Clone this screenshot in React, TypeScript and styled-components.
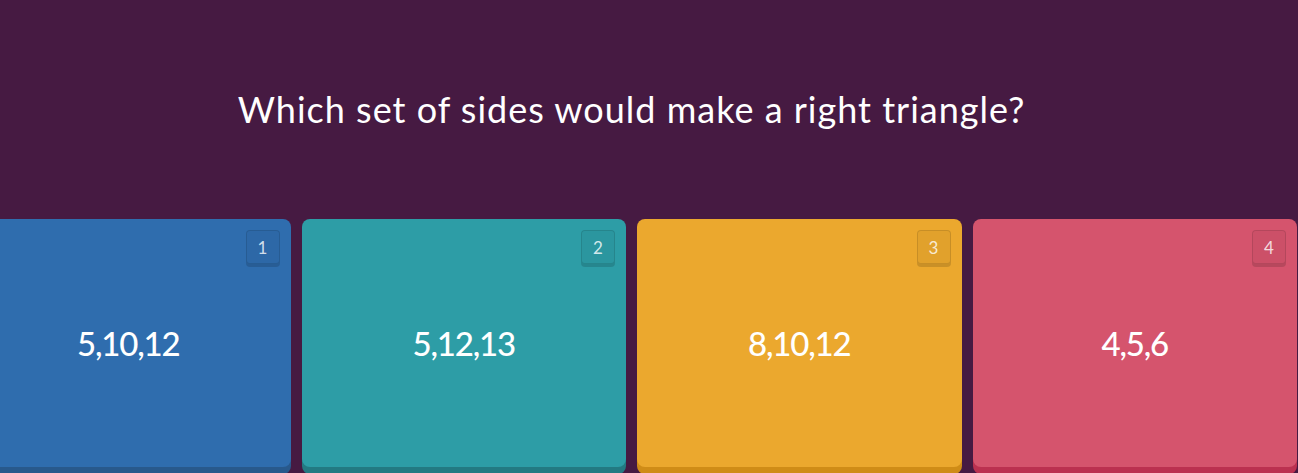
import React from 'react';
import styled, { createGlobalStyle } from 'styled-components';

const GlobalStyle = createGlobalStyle`
  html, body {
    margin: 0;
    padding: 0;
    background: #461a42;
    overflow: hidden;
  }
  body {
    font-family: Lato, 'Noto Sans', sans-serif;
  }
`;

const Page = styled.div`
  height: 473px;
  overflow: hidden;
  background: #461a42;
`;

const Stage = styled.div`
  width: 1331px;
  margin-left: -34px;
  display: flex;
  flex-direction: column;
`;

const QuestionArea = styled.div`
  height: 219px;
  display: flex;
  align-items: center;
  justify-content: center;
`;

const Question = styled.h1`
  margin: 0 0 2px;
  font-size: 36px;
  font-weight: 400;
  color: #ffffff;
  letter-spacing: 1px;
`;

const Options = styled.div`
  display: flex;
  gap: 11px;
`;

const Option = styled.div<{ $bg: string; $shade: string }>`
  position: relative;
  flex: 0 0 324.5px;
  height: 248px;
  border-radius: 8px;
  background: ${({ $bg }) => $bg};
  box-shadow: 0 7px 0 ${({ $shade }) => $shade};
  display: flex;
  align-items: center;
  justify-content: center;
`;

const Badge = styled.span`
  position: absolute;
  top: 11px;
  right: 11px;
  width: 34px;
  height: 34px;
  box-sizing: border-box;
  border: 1px solid rgba(0, 0, 0, 0.12);
  border-radius: 4px;
  background: rgba(0, 0, 0, 0.04);
  box-shadow: 0 3px 0 rgba(0, 0, 0, 0.14);
  display: flex;
  align-items: center;
  justify-content: center;
  font-size: 17px;
  color: rgba(255, 255, 255, 0.8);
`;

const Answer = styled.span`
  font-size: 33px;
  font-weight: 500;
  color: #ffffff;
  letter-spacing: -1.2px;
  margin-bottom: 1px;
`;

const options = [
  { label: '5,10,12', bg: '#2f6dae', shade: '#28598c' },
  { label: '5,12,13', bg: '#2d9da6', shade: '#237a82' },
  { label: '8,10,12', bg: '#eba82e', shade: '#cf8c17' },
  { label: '4,5,6', bg: '#d5546d', shade: '#bb3150' },
];

export default function App() {
  return (
    <Page>
      <GlobalStyle />
      <Stage>
        <QuestionArea>
          <Question>Which set of sides would make a right triangle?</Question>
        </QuestionArea>
        <Options>
          {options.map((opt, i) => (
            <Option key={opt.label} $bg={opt.bg} $shade={opt.shade}>
              <Badge>{i + 1}</Badge>
              <Answer>{opt.label}</Answer>
            </Option>
          ))}
        </Options>
      </Stage>
    </Page>
  );
}
